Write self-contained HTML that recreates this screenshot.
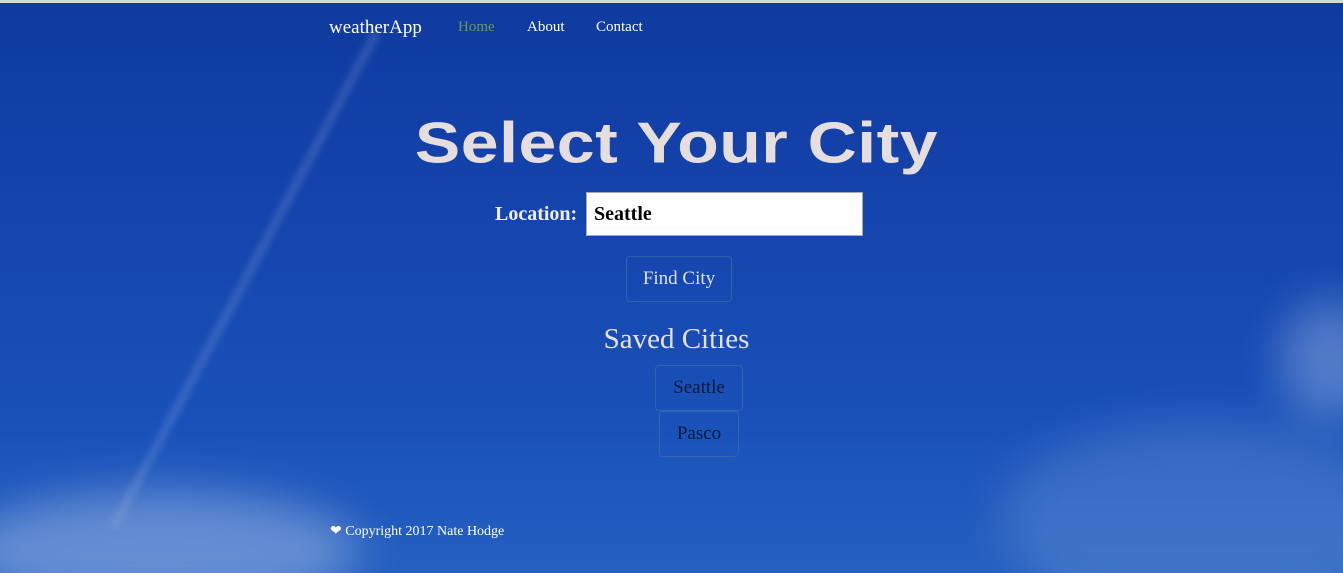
<!DOCTYPE html>
<html><head><meta charset="utf-8"><style>
html,body{margin:0;padding:0;width:1343px;height:573px;overflow:hidden}
body{position:relative;font-family:"Liberation Serif",serif;
background:linear-gradient(180deg,#0f3a9f 0%,#1545ae 40%,#1a52ba 75%,#2560c0 100%)}
#w{position:absolute;left:0;top:0;width:1343px;height:573px;overflow:hidden}
#bar{position:absolute;left:0;top:0;width:1343px;height:3px;background:#d8d8d8;z-index:5}
.cloud{position:absolute;border-radius:50%;filter:blur(22px)}
.nav{position:absolute;top:19px;font-size:15px;color:#fff}
.t{position:absolute;left:0;width:1343px;text-align:center}
.btn{position:absolute;border:1px solid rgba(60,110,170,.7);border-radius:4px;font-size:19px;text-align:center;box-sizing:border-box}
</style></head><body><div id="w"><div id="bar"></div>
<div class="cloud" style="left:-40px;top:490px;width:400px;height:120px;background:rgba(220,230,245,.35)"></div>
<div class="cloud" style="left:1000px;top:420px;width:400px;height:200px;background:rgba(190,210,240,.18)"></div>
<div class="cloud" style="left:1280px;top:300px;width:100px;height:120px;background:rgba(220,230,245,.3)"></div>
<div style="position:absolute;left:240px;top:0px;width:10px;height:560px;background:rgba(170,190,230,.18);transform:rotate(28deg);filter:blur(3px)"></div>
<div class="nav" style="left:329px;top:17px;font-size:19px">weatherApp</div>
<div class="nav" style="left:458px;color:#6a9a55">Home</div>
<div class="nav" style="left:527px">About</div>
<div class="nav" style="left:596px">Contact</div>
<div class="t" style="top:104px;left:5px;font-family:'Liberation Sans',sans-serif;font-weight:bold;font-size:68px;color:#e6dede;letter-spacing:0.5px;transform:scaleY(0.85)">Select Your City</div>
<div style="position:absolute;left:495px;top:203px;font-size:20px;font-weight:bold;color:#eee">Location:</div>
<div style="position:absolute;left:586px;top:192px;width:277px;height:44px;background:#fff;border:1px solid #aaa;box-sizing:border-box;font-size:20px;font-weight:bold;padding:10px 0 0 7px">Seattle</div>
<div class="btn" style="left:626px;top:256px;width:106px;height:46px;line-height:43px;color:#e0e0ee">Find City</div>
<div class="t" style="top:323px;left:5px;font-size:29px;color:#e8e0e8">Saved Cities</div>
<div class="btn" style="left:655px;top:365px;width:88px;height:46px;line-height:43px;color:#0a1a3a">Seattle</div>
<div class="btn" style="left:659px;top:411px;width:80px;height:46px;line-height:43px;color:#0a1a3a">Pasco</div>
<div style="position:absolute;left:330px;top:523px;font-size:14px;color:#fff">&#10084; Copyright 2017 Nate Hodge</div>
</div></body></html>
